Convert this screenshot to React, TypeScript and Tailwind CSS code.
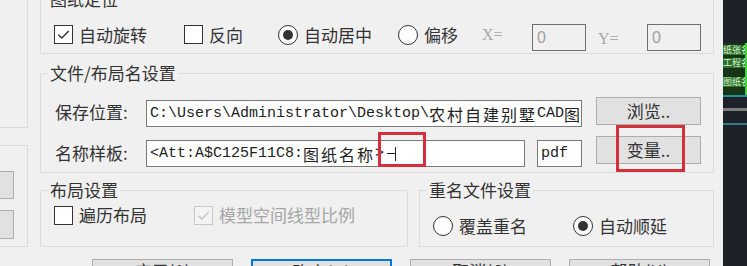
import React from 'react';

const CheckBox: React.FC<{ checked?: boolean; disabled?: boolean }> = ({ checked, disabled }) => (
  <span
    className={`w-[19px] h-[19px] shrink-0 border flex items-center justify-center ${
      disabled ? 'border-[#c8c8c8] bg-[#f4f4f4]' : 'border-[#333] bg-white'
    }`}
  >
    {checked && (
      <svg viewBox="0 0 16 16" className="w-[15px] h-[15px]">
        <path
          d="M2.5 8.2 L6.2 11.8 L13.6 4.2"
          fill="none"
          stroke={disabled ? '#c4c4c4' : '#333'}
          strokeWidth="1.5"
        />
      </svg>
    )}
  </span>
);

const Radio: React.FC<{ checked?: boolean }> = ({ checked }) => (
  <span className="w-[20px] h-[20px] shrink-0 rounded-full border border-[#333] bg-white flex items-center justify-center">
    {checked && <span className="w-[10px] h-[10px] rounded-full bg-[#333]" />}
  </span>
);

const Option: React.FC<{ w: string; control: React.ReactNode; label: string; muted?: boolean }> = ({
  w,
  control,
  label,
  muted,
}) => (
  <div className={`${w} shrink-0 flex items-center gap-[6px] h-[20px]`}>
    {control}
    <span className={`whitespace-nowrap leading-[20px] ${muted ? 'text-[#a6a6a6]' : ''}`}>{label}</span>
  </div>
);

const Button: React.FC<{ w: string; label: string; primary?: boolean; children?: React.ReactNode }> = ({
  w,
  label,
  primary,
  children,
}) => (
  <div
    className={`relative ${w} h-[28px] shrink-0 bg-[#e1e1e1] flex items-center justify-center leading-[20px] ${
      primary ? 'border-2 border-[#0078d7]' : 'border border-[#adadad]'
    }`}
  >
    {label}
    {children}
  </div>
);

const FootButton: React.FC<{ label: string; primary?: boolean }> = ({ label, primary }) => (
  <div
    className={`w-[141px] h-[28px] shrink-0 bg-[#e1e1e1] flex justify-center pt-[1px] leading-[20px] ${
      primary ? 'border-2 border-[#0078d7]' : 'border border-[#adadad]'
    }`}
  >
    {label}
  </div>
);

const Cjk: React.FC<{ children: React.ReactNode }> = ({ children }) => (
  <span className="text-[16px] tracking-[2px] font-['Noto_Sans_CJK_SC',sans-serif]">{children}</span>
);

const monoInput =
  "h-[27px] shrink-0 bg-white border border-[#7a7a7a] pl-[3px] flex items-center overflow-hidden whitespace-nowrap font-['Liberation_Mono','Noto_Sans_CJK_SC',monospace] text-[15px] leading-[20px] text-[#222]";

export default function App() {
  return (
    <div className="w-[747px] h-[266px] overflow-hidden bg-[#f0f0f0] flex text-[17px] text-[#333] font-['Noto_Sans_CJK_SC','Noto_Sans',sans-serif]">
      {/* cut-off panel on the left */}
      <div className="w-[40px] shrink-0 flex flex-col">
        <div className="w-[28px] h-[128px] border-r border-b border-[#dadada]" />
        <div className="mt-[17px] w-[28px] h-[102px] border-t border-r border-b border-[#dadada] pt-[25px] flex flex-col gap-[11px]">
          <div className="w-[14px] h-[28px] bg-[#e1e1e1] border border-l-0 border-[#adadad]" />
          <div className="w-[14px] h-[29px] bg-[#e1e1e1] border border-l-0 border-[#adadad]" />
        </div>
      </div>

      {/* dialog body */}
      <div className="w-[674px] shrink-0 flex flex-col">
        <fieldset className="-mt-[10px] border border-[#dcdcdc] px-0">
          <legend className="ml-[7px] px-[2px] leading-[18px]">图纸定位</legend>
          <div className="pl-[13px] pt-[16px] pb-[2px] flex items-start">
            <div className="flex items-center h-[19px] mt-[1px]">
              <Option w="w-[130px]" control={<CheckBox checked />} label="自动旋转" />
              <Option w="w-[94px]" control={<CheckBox />} label="反向" />
              <Option w="w-[120px]" control={<Radio checked />} label="自动居中" />
              <Option w="w-[84px]" control={<Radio />} label="偏移" />
              <span className="w-[50px] font-['Liberation_Serif',serif] text-[16px] text-[#a8a8a8]">X=</span>
            </div>
            <div className="w-[54px] h-[27px] border border-[#6e6e6e] pl-[4px] flex items-center text-[16px] text-[#a0a0a0] font-['Liberation_Sans',sans-serif]">
              0
            </div>
            <span className="w-[61px] pl-[12px] pt-[3px] font-['Liberation_Serif',serif] text-[16px] text-[#a8a8a8]">
              Y=
            </span>
            <div className="w-[54px] h-[27px] border border-[#6e6e6e] pl-[4px] flex items-center text-[16px] text-[#a0a0a0] font-['Liberation_Sans',sans-serif]">
              0
            </div>
          </div>
        </fieldset>

        <fieldset className="mt-[10px] border border-[#dcdcdc] px-0">
          <legend className="ml-[7px] px-[2px] leading-[18px]">文件/布局名设置</legend>
          <div className="pl-[14px] pt-[15px] pb-[5px] flex flex-col gap-[9px]">
            <div className="flex items-start">
              <span className="w-[91px] mt-[5px] leading-[20px] whitespace-nowrap">保存位置:</span>
              <div className={`${monoInput} w-[436px] mt-[3px]`}>
                C:\Users\Administrator\Desktop\<Cjk>农村自建别墅</Cjk>CAD<Cjk>图纸</Cjk>
              </div>
              <div className="ml-[14px]">
                <Button w="w-[105px]" label="浏览.." />
              </div>
            </div>
            <div className="flex items-start">
              <span className="w-[91px] mt-[7px] leading-[20px] whitespace-nowrap">名称样板:</span>
              <div className="relative mt-[4px]">
                <div className={`${monoInput} w-[379px]`}>
                  &lt;Att:A$C125F11C8:<Cjk>图纸名称</Cjk>&gt;
                  <span className="relative w-[14px] h-[14px] ml-[3px]">
                    <span className="absolute left-0 top-[6px] w-[8px] h-[1px] bg-[#222]" />
                    <span className="absolute left-[8px] top-0 w-[1px] h-[14px] bg-[#222]" />
                  </span>
                </div>
                <div className="absolute left-[232px] -top-[8px] w-[48px] h-[35px] border-[3px] border-[#d2303c]" />
              </div>
              <div className={`${monoInput} w-[45px] mt-[4px] ml-[12px]`}>pdf</div>
              <div className="ml-[14px]">
                <Button w="w-[105px]" label="变量..">
                  <div className="absolute left-[19px] -top-[12px] w-[69px] h-[47px] border-[3px] border-[#d2303c]" />
                </Button>
              </div>
            </div>
          </div>
        </fieldset>

        <div className="mt-[8px] flex gap-[11px]">
          <fieldset className="w-[368px] border border-[#dcdcdc] px-0">
            <legend className="ml-[7px] px-[2px] leading-[18px]">布局设置</legend>
            <div className="pl-[13px] pt-[6px] pb-[21px] flex items-center">
              <Option w="w-[140px]" control={<CheckBox />} label="遍历布局" />
              <Option w="w-[200px]" control={<CheckBox checked disabled />} label="模型空间线型比例" muted />
            </div>
          </fieldset>
          <fieldset className="w-[295px] border border-[#dcdcdc] px-0">
            <legend className="ml-[7px] px-[2px] leading-[18px]">重名文件设置</legend>
            <div className="pl-[13px] pt-[17px] pb-[9px] flex items-center">
              <Option w="w-[140px]" control={<Radio />} label="覆盖重名" />
              <Option w="w-[120px]" control={<Radio checked />} label="自动顺延" />
            </div>
          </fieldset>
        </div>

        <div className="mt-[12px] ml-[52px] flex gap-[18px]">
          <FootButton label="应用(A)" />
          <FootButton label="确定(O)" primary />
          <FootButton label="取消(C)" />
          <FootButton label="帮助(H)" />
        </div>
      </div>

      <div className="w-[9px] shrink-0" />

      {/* CAD drawing area behind the dialog */}
      <div className="w-[24px] shrink-0 bg-[#1e2228] flex flex-col pt-[43px]">
        <div className="h-[52px] border-r-2 border-[#3bd63b] bg-[#163516] flex flex-col gap-[3px] pt-[2px] overflow-hidden font-['Noto_Sans_CJK_SC',sans-serif] text-[9px] leading-[10px] text-[#d8f5c8] whitespace-nowrap">
          <span className="bg-[#2d6e2d]">纸张名称</span>
          <span className="bg-[#2d6e2d]">工程名称</span>
          <span className="mt-[6px] bg-[#2d6e2d]">图纸名称</span>
        </div>
        <div className="h-[2px] bg-[#2b8c99]" />
        <div className="mt-[11px] h-[3px] bg-[#7c7c7c]" />
        <div className="mt-[12px] h-[2px] bg-[#2b7f8a]" />
      </div>
    </div>
  );
}
